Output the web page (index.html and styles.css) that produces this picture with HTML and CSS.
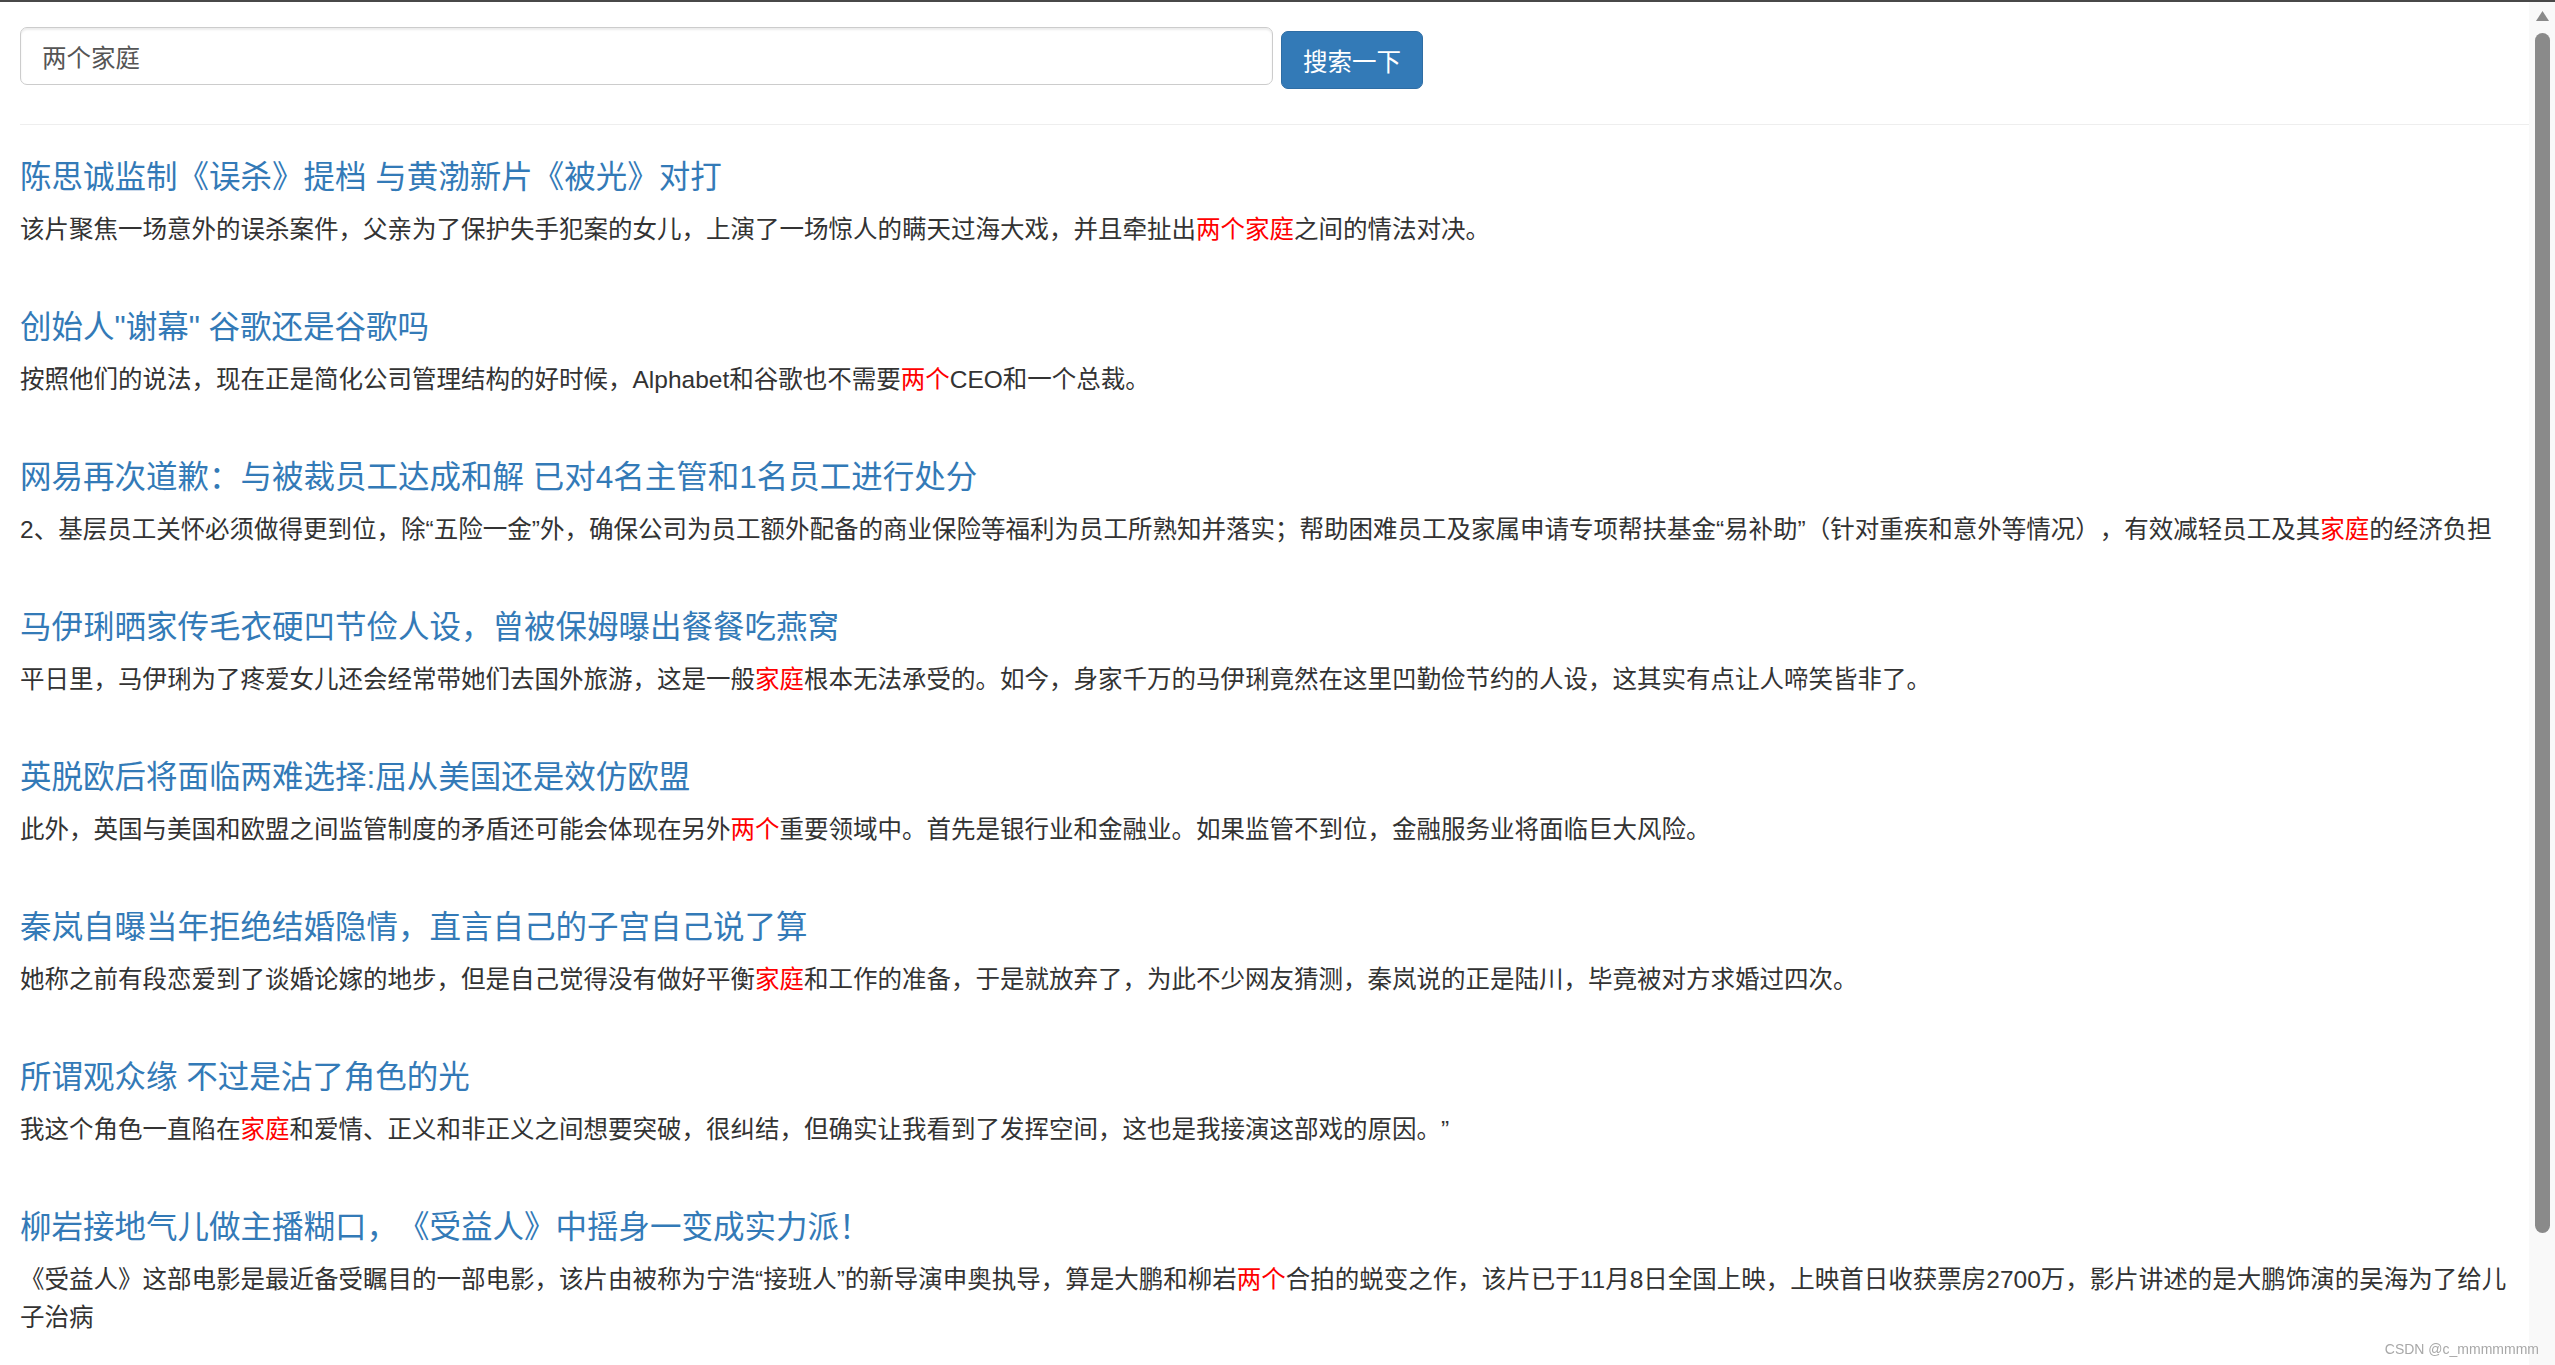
FILE: index.html
```html
<!DOCTYPE html>
<html lang="zh-CN">
<head>
<meta charset="utf-8">
<title>搜索</title>
<link rel="stylesheet" href="styles.css">
</head>
<body>
<div class="topline"></div>
<div class="page">
  <form class="search">
    <input class="search-input" type="text" value="两个家庭">
    <button class="search-btn" type="button">搜索一下</button>
  </form>
  <hr class="divider">
  <div class="results">
    <div class="item">
      <a class="title" href="#">陈思诚监制《误杀》提档 与黄渤新片《被光》对打</a>
      <p class="desc">该片聚焦一场意外的误杀案件，父亲为了保护失手犯案的女儿，上演了一场惊人的瞒天过海大戏，并且牵扯出<span class="hl">两个家庭</span>之间的情法对决。</p>
    </div>
    <div class="item">
      <a class="title" href="#">创始人"谢幕" 谷歌还是谷歌吗</a>
      <p class="desc">按照他们的说法，现在正是简化公司管理结构的好时候，Alphabet和谷歌也不需要<span class="hl">两个</span>CEO和一个总裁。</p>
    </div>
    <div class="item">
      <a class="title" href="#">网易再次道歉：与被裁员工达成和解 已对4名主管和1名员工进行处分</a>
      <p class="desc">2、基层员工关怀必须做得更到位，除“五险一金”外，确保公司为员工额外配备的商业保险等福利为员工所熟知并落实；帮助困难员工及家属申请专项帮扶基金“易补助”（针对重疾和意外等情况），有效减轻员工及其<span class="hl">家庭</span>的经济负担</p>
    </div>
    <div class="item">
      <a class="title" href="#">马伊琍晒家传毛衣硬凹节俭人设，曾被保姆曝出餐餐吃燕窝</a>
      <p class="desc">平日里，马伊琍为了疼爱女儿还会经常带她们去国外旅游，这是一般<span class="hl">家庭</span>根本无法承受的。如今，身家千万的马伊琍竟然在这里凹勤俭节约的人设，这其实有点让人啼笑皆非了。</p>
    </div>
    <div class="item">
      <a class="title" href="#">英脱欧后将面临两难选择:屈从美国还是效仿欧盟</a>
      <p class="desc">此外，英国与美国和欧盟之间监管制度的矛盾还可能会体现在另外<span class="hl">两个</span>重要领域中。首先是银行业和金融业。如果监管不到位，金融服务业将面临巨大风险。</p>
    </div>
    <div class="item">
      <a class="title" href="#">秦岚自曝当年拒绝结婚隐情，直言自己的子宫自己说了算</a>
      <p class="desc">她称之前有段恋爱到了谈婚论嫁的地步，但是自己觉得没有做好平衡<span class="hl">家庭</span>和工作的准备，于是就放弃了，为此不少网友猜测，秦岚说的正是陆川，毕竟被对方求婚过四次。</p>
    </div>
    <div class="item">
      <a class="title" href="#">所谓观众缘 不过是沾了角色的光</a>
      <p class="desc">我这个角色一直陷在<span class="hl">家庭</span>和爱情、正义和非正义之间想要突破，很纠结，但确实让我看到了发挥空间，这也是我接演这部戏的原因。”</p>
    </div>
    <div class="item">
      <a class="title" href="#">柳岩接地气儿做主播糊口，《受益人》中摇身一变成实力派！</a>
      <p class="desc">《受益人》这部电影是最近备受瞩目的一部电影，该片由被称为宁浩“接班人”的新导演申奥执导，算是大鹏和柳岩<span class="hl">两个</span>合拍的蜕变之作，该片已于11月8日全国上映，上映首日收获票房2700万，影片讲述的是大鹏饰演的吴海为了给儿子治病</p>
    </div>
  </div>
</div>
<div class="scrollbar">
  <svg class="scroll-arrow" width="15" height="12" viewBox="0 0 15 12"><polygon points="7.5,1 14,11 1,11" fill="#8a8a8a"/></svg>
  <div class="scroll-thumb"></div>
</div>
<div class="watermark">CSDN @c_mmmmmmm</div>
</body>
</html>
```
FILE: styles.css
```css
html, body {
  margin: 0;
  padding: 0;
  background: #fff;
  overflow: hidden;
}
body {
  font-family: "Liberation Sans", "Noto Sans CJK SC", sans-serif;
  color: #333;
  text-spacing-trim: space-all;
}
.topline {
  height: 2px;
  background: #484848;
}
.page {
  padding: 0 26px 0 20px;
}
.search {
  display: flex;
  align-items: flex-start;
  gap: 8px;
  margin: 25px 0 0;
}
.search-input {
  box-sizing: border-box;
  width: 1253px;
  height: 58px;
  margin: 0;
  padding: 0 21px;
  border: 1px solid #ccc;
  border-radius: 7px;
  box-shadow: inset 0 2px 2px rgba(0, 0, 0, 0.075);
  font-family: inherit;
  font-size: 24.5px;
  color: #555;
  background: #fff;
  outline: none;
}
.search-btn {
  box-sizing: border-box;
  width: 142px;
  height: 58px;
  margin: 4px 0 0;
  padding: 0;
  border: 1px solid #2e6da4;
  border-radius: 7px;
  background: #337ab7;
  color: #fff;
  font-family: inherit;
  font-size: 24.5px;
}
.divider {
  height: 0;
  margin: 35px 0 0;
  border: 0;
  border-top: 1px solid #eee;
}
.results {
  display: flex;
  flex-direction: column;
  gap: 61.5px;
  margin-top: 35px;
  padding-right: 12px;
}
.item {
  display: flex;
  flex-direction: column;
  gap: 15.5px;
}
.title {
  font-size: 31.5px;
  line-height: 35px;
  color: #337ab7;
  text-decoration: none;
}
.desc {
  margin: 0;
  font-size: 24.5px;
  line-height: 38px;
  color: #333;
}
.hl {
  color: #f00;
}
.scrollbar {
  position: fixed;
  top: 2px;
  right: 0;
  bottom: 0;
  width: 26px;
  background: #f9f9f9;
}
.scroll-arrow {
  position: absolute;
  top: 8px;
  left: 6px;
}
.scroll-thumb {
  position: absolute;
  top: 31px;
  left: 6px;
  width: 15px;
  height: 1200px;
  border-radius: 8px;
  background: #8a8a8a;
}
.watermark {
  position: fixed;
  right: 16px;
  bottom: 8px;
  font-family: "Liberation Sans", sans-serif;
  font-size: 14px;
  line-height: 16px;
  color: #a8a8a8;
}
```
